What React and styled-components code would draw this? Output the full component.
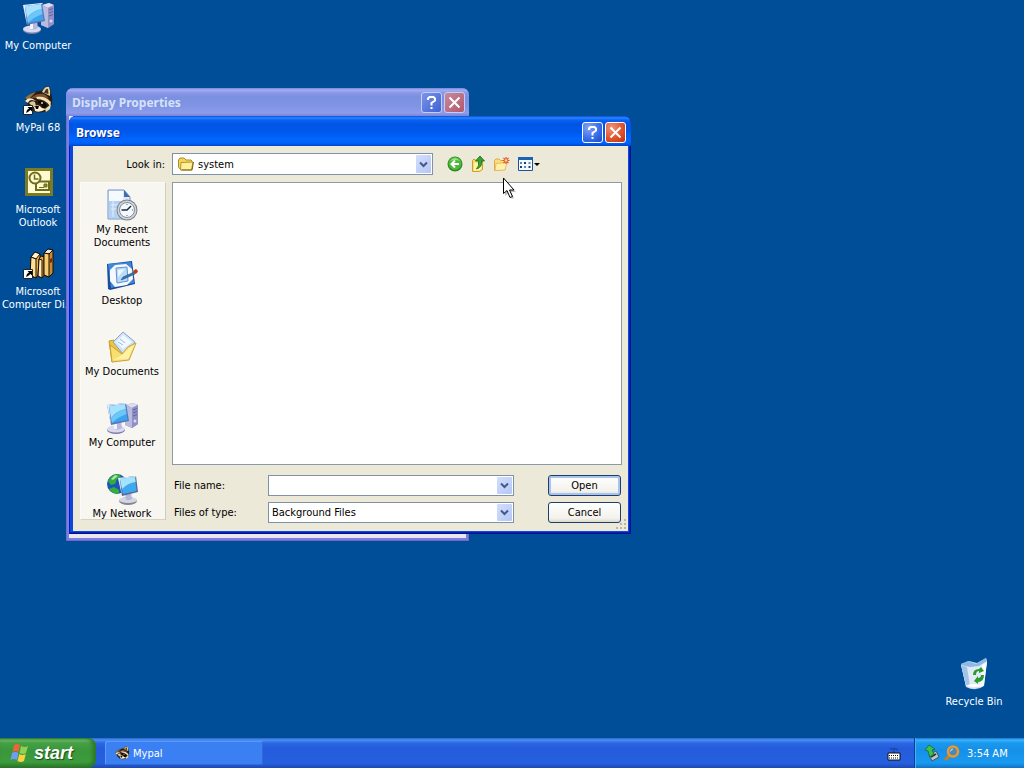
import styled, { createGlobalStyle, css } from "styled-components";

const GlobalStyle = createGlobalStyle`
  * {
    box-sizing: border-box;
  }
  body {
    margin: 0;
    font-family: "DejaVu Sans Condensed", "Noto Sans", sans-serif;
    font-size: 11px;
    line-height: 13px;
    color: #000;
  }
  button, input, select {
    font: inherit;
    color: inherit;
  }
  svg {
    display: block;
    flex: none;
  }
`;

/* desktop */

const Screen = styled.div`
  display: flex;
  flex-direction: column;
  height: 100vh;
  overflow: hidden;
  background: #004e98;
`;

const Desktop = styled.main`
  position: relative;
  flex: 1;
`;

const Shortcuts = styled.nav`
  display: flex;
  flex-direction: column;
  align-items: flex-start;
  padding-top: 2px;
`;

const Shortcut = styled.a`
  display: flex;
  flex-direction: column;
  align-items: center;
  gap: 5px;
  width: 76px;
  height: 82px;
  color: #fff;
  text-align: center;
  text-decoration: none;
  white-space: pre;
`;

const BinCorner = styled.div`
  position: absolute;
  right: 12px;
  bottom: 30px;
  a {
    height: auto;
  }
`;

/* windows */

const Window = styled.section`
  position: absolute;
  border-radius: 7px 7px 0 0;
  ${(props) =>
    props.$active
      ? css`
          left: 69px;
          top: 116px;
          width: 562px;
          background: #0a48e0;
          box-shadow: inset 1px 0 #0019cf, inset -1px -1px #00138c, inset -2px -2px #0522b8;
        `
      : css`
          left: 66px;
          top: 88px;
          width: 403px;
          background: #7b80de;
          box-shadow: inset 1px 0 #6d6fcb, inset -1px -1px #6f68c8;
        `}
`;

const TitleBar = styled.header`
  display: flex;
  align-items: center;
  gap: 2px;
  height: ${(props) => (props.$active ? 30 : 28)}px;
  padding: ${(props) => (props.$active ? "3px 5px 0 7px" : "1px 4px 0 6px")};
  border-radius: 7px 7px 0 0;
  background: ${(props) =>
    props.$active
      ? "linear-gradient(#0a4fd8 0, #2a86ff 2px, #0a62f4 4px, #0054e3 8px, #0058ec 16px, #0066ff 23px, #0062fa 27px, #0046cc 30px)"
      : "linear-gradient(#7486dc 0, #a3aef2 2px, #8797e6 5px, #7b90e0 9px, #8094e4 18px, #8d9cec 25px, #7c82d8 28px)"};
`;

const Title = styled.h1`
  flex: 1;
  margin: 0;
  padding-top: 1px;
  font: bold 12px/18px "Noto Sans", "Open Sans", sans-serif;
  color: ${(props) => (props.$active ? "#fff" : "#d5e1f8")};
  text-shadow: ${(props) => (props.$active ? "1px 1px #0a2f94" : "none")};
`;

const CaptionButton = styled.button`
  display: grid;
  place-items: center;
  width: 21px;
  height: 21px;
  padding: 0;
  border: 1px solid #fff;
  border-radius: 3px;
  background: ${(props) =>
    props.$close
      ? "radial-gradient(circle at 30% 25%, #f0937a, #e2522c 55%, #b8300f)"
      : "radial-gradient(circle at 30% 25%, #86a6f5, #3c6ee8 55%, #1c48c4)"};
  ${(props) =>
    props.$dim &&
    css`
      border-color: #c5cdf5;
      background: ${props.$close
        ? "linear-gradient(135deg, #c58a9e, #b3586c)"
        : "linear-gradient(135deg, #7a94ea, #3e62d2)"};
    `}
`;

const BackBody = styled.div`
  height: 422px;
  margin: 0 3px;
  background: #e9e7f4;
`;

const WindowEdge = styled.div`
  height: 3px;
`;

const DialogBody = styled.form`
  position: relative;
  margin: 0 3px 0 4px;
  padding: 7px 6px 8px 7px;
  background: #ece9d8;
`;

const LookRow = styled.div`
  display: grid;
  grid-template-columns: 85px 261px 1fr;
  align-items: center;
  column-gap: 7px;
  margin-bottom: 7px;
  > label {
    text-align: right;
  }
`;

const Toolbar = styled.div`
  display: flex;
  align-items: center;
  gap: 7px;
  padding-left: 7px;
`;

const ToolButton = styled.button`
  display: flex;
  padding: 0;
  border: 0;
  background: none;
`;

const Columns = styled.div`
  display: grid;
  grid-template-columns: 86px 1fr;
  column-gap: 6px;
  align-items: start;
`;

const Places = styled.nav`
  height: 338px;
  overflow: hidden;
  background: #f8f6f1;
  border: 1px solid #fbfaf6;
  border-right-color: #cfccba;
  border-bottom-color: #d5d2c2;
`;

const Place = styled.button`
  display: flex;
  flex-direction: column;
  align-items: center;
  gap: 2px;
  width: 100%;
  height: 71px;
  padding: 6px 2px 0 0;
  border: 0;
  background: none;
  text-align: center;
  white-space: pre;
`;

const FileList = styled.div`
  height: 283px;
  margin-bottom: 10px;
  background: #fff;
  border: 1px solid #8a9aa8;
`;

const Fields = styled.div`
  display: grid;
  grid-template-columns: 94px 246px 1fr;
  row-gap: 6px;
  align-items: center;
  padding-left: 2px;
  padding-right: 1px;
  > button {
    justify-self: end;
  }
`;

const Combo = styled.div`
  position: relative;
  display: flex;
  height: ${(props) => (props.$tall ? 22 : 21)}px;
  border: 1px solid #7f93a8;
  background: #fff;
  select,
  input {
    flex: 1;
    min-width: 0;
    padding: 0 20px 0 ${(props) => (props.$icon ? 25 : 3)}px;
    border: 0;
    outline: 0;
    background: none;
    appearance: none;
  }
  > svg {
    position: absolute;
    left: 4px;
    top: 2px;
    pointer-events: none;
  }
`;

const Arrow = styled.span`
  position: absolute;
  top: 1px;
  right: 1px;
  bottom: 1px;
  display: grid;
  place-items: center;
  width: 15px;
  border-radius: 1px;
  background: linear-gradient(135deg, #d3defc, #b4c7f6);
  pointer-events: none;
`;

const PushButton = styled.button`
  width: 73px;
  height: 21px;
  padding: 0;
  border: 1px solid #1d3f6e;
  border-radius: 3px;
  background: linear-gradient(#fff, #f3f2ec 80%, #dcd8cc);
  box-shadow: ${(props) => (props.$default ? "inset 0 0 0 2px #a9c3ef" : "none")};
`;

const Grip = styled.svg`
  position: absolute;
  right: 1px;
  bottom: 1px;
`;

const Cursor = styled.svg`
  position: absolute;
  left: 502px;
  top: 177px;
  pointer-events: none;
`;

/* taskbar */

const Taskbar = styled.footer`
  display: flex;
  align-items: stretch;
  height: 30px;
  color: #fff;
  background: linear-gradient(#2a62cc 0, #4a90f5 2px, #2c68e2 5px, #245bdb 10px, #2660de 25px, #1c48b4 30px);
`;

const StartButton = styled.button`
  display: flex;
  align-items: center;
  gap: 4px;
  width: 96px;
  padding: 0 0 0 10px;
  border: 0;
  border-radius: 0 8px 8px 0;
  color: #fff;
  font: italic bold 18px/20px "Liberation Sans", sans-serif;
  text-shadow: 1px 1px 1px #1d4a1c;
  background: linear-gradient(#2f7d30 0, #6cbb6a 2px, #46a046 5px, #3a973b 12px, #3c9c3d 24px, #2b7329 30px);
  box-shadow: inset -3px 0 4px #2a7429;
`;

const Tasks = styled.div`
  flex: 1;
  padding: 3px 0 3px 9px;
`;

const TaskButton = styled.button`
  display: flex;
  align-items: center;
  gap: 3px;
  width: 158px;
  height: 24px;
  padding: 0 9px;
  border: 0;
  border-radius: 2px;
  color: #fff;
  background: #3b80f2;
  box-shadow: inset 1px 1px #5a9af8, inset -1px -1px #2f6ad8;
`;

const Keyboard = styled.button`
  display: flex;
  align-items: center;
  padding: 2px 13px 0 0;
  border: 0;
  background: none;
`;

const Tray = styled.div`
  display: flex;
  align-items: center;
  gap: 3px;
  width: 110px;
  padding: 0 0 0 9px;
  border-left: 1px solid #0c3a9c;
  background: linear-gradient(#1274d0 0, #3cb4fa 2px, #1a98ee 5px, #1590e8 12px, #189aef 25px, #1070c4 30px);
  box-shadow: inset 1px 0 #3fb6f8;
  time {
    margin-left: 3px;
  }
`;

/* icons */

const Computer = () => (
  <svg width="32" height="32" viewBox="0 0 32 32">
    <path d="M20 3 27 1l5 2v19l-6 4-7-3z" fill="#8586bd" />
    <path d="m20 3 7-2 5 2-6 3z" fill="#dcdcf2" />
    <path d="m19 3 7 3v20l-7-3z" fill="#b9bae0" />
    <path d="m26 6 6-3v19l-6 4z" fill="#8f90c4" />
    <path d="m27 8 4-1.500M27 11l4-1.500M27 14l4-1.500" stroke="#61639e" />
    <circle cx="29" cy="19" r="1.500" fill="#d8daf4" />
    <ellipse cx="10" cy="28" rx="9" ry="4" fill="#7d7fb0" />
    <ellipse cx="10" cy="27" rx="9" ry="3.500" fill="#d9daf0" />
    <path d="m8 20 7-1 1 7q-4 3-8 1z" fill="#b7b8de" />
    <path d="M8 21h3v6H8z" fill="#f4f4ff" />
    <path d="M1 3 20 1l3 18-18 4z" fill="#5d75b8" />
    <path d="M1 3 20 1l1 1-18 2 2 19z" fill="#e6eafc" />
    <path d="m3 4 16-2 2.500 16L6 21z" fill="#3ba5ec" />
    <path d="m3 4 16-2 .7 5Q10 9 5 16z" fill="#a6e2fd" />
    <path d="m5 16q6-7 14.700-9l.8 5Q12 15 6 21z" fill="#6cc6f8" />
  </svg>
);

const ShortcutArrow = () => (
  <g>
    <path d="M1.500 21.500h9v9h-9z" fill="#fff" stroke="#222" />
    <path d="m4 29 1-3 2-1.500L5.500 23H10v4.500L8.500 26 6 28z" fill="#000" />
  </g>
);

const RaccoonArt = () => (
  <>
    <path d="M3 15q6-8 16-8l6-5q4 1 4 7 2 5 1 11l-5 7q-8 3-14 0L7 23z" fill="#2a1b12" />
    <path d="M20 8q3-6 7-5 2 4 1 9z" fill="#e7d3a4" />
    <path d="M22 9q2-5 4-4l.5 5z" fill="#4a3524" />
    <path d="M3 14q5-5 11-6l-4 4-4 4z" fill="#8c7048" />
    <path d="M8 15q5-5 9-5 7-1 10 5l-5-2q-5-2-8 1-3 0-6 1z" fill="#7c5029" />
    <path d="M3 17q3-4 8-2l3 2-4-1q-3 0-4 3z" fill="#f7e9c0" />
    <path d="M14 13q8-2 15 5l-1 4q-5-7-13-7z" fill="#f4dfaf" />
    <path d="M7 19q3-3 6-1l1 4-3 1z" fill="#d8c69c" />
    <path d="M16 17q7 0 9 5l-4 3q0-5-5-6z" fill="#0c0805" />
    <path d="M12 23q4-4 8 1l4 1q-6 4-11 2z" fill="#fff1cf" />
    <path d="M13 22h4l-1 3h-2z" fill="#000" />
    <path d="m23 25 6-5-1 5-4 3z" fill="#f0d9a4" />
    <circle cx="20" cy="19" r="1" fill="#e9d9a8" />
  </>
);

const Raccoon = () => (
  <svg width="32" height="32" viewBox="0 0 32 32">
    <RaccoonArt />
    <ShortcutArrow />
  </svg>
);

const Outlook = () => (
  <svg width="32" height="32" viewBox="0 0 32 32">
    <path d="M3 2h28v28H3z" fill="#7c7a22" />
    <path d="M6 5h22v22H6z" fill="#fffbd0" />
    <path d="M14 15.500h13v8.500H14z" fill="#fffbd0" stroke="#6f6d1c" strokeWidth="2" />
    <circle cx="13" cy="12" r="5.500" fill="#fffbd0" stroke="#6f6d1c" strokeWidth="2" />
    <path d="M12.500 8.500v4.500h4" fill="none" stroke="#6f6d1c" strokeWidth="1.500" />
    <path d="M22 18h3v3h-3zM17 21.500h5" fill="#8a881f" stroke="#6f6d1c" />
  </svg>
);

const Books = () => (
  <svg width="32" height="32" viewBox="0 0 32 32">
    <g stroke="#160c00" strokeWidth="1" strokeLinejoin="round">
      <path d="m9 9 4-5 5 2v19l-4 5-6-3z" fill="#f2b03c" />
      <path d="m9 9 4-5 5 2-4 5z" fill="#fff6d8" />
      <path d="m9 9 5 2v19l-6-3z" fill="#ffe09a" />
      <path d="m17 11 2-3 4 1v17l-3 4-4-2z" fill="#eda63a" />
      <path d="m17 11 3 1v18l-4-2z" fill="#ffe9b8" />
      <path d="m22 5 4-4 5 1v23l-4 4-5-2z" fill="#c98a2c" />
      <path d="m22 5 4-4 5 1-4 4z" fill="#e8e4d8" />
      <path d="m22 5 5 1v23l-5-2z" fill="#f8cd72" />
    </g>
    <path d="m28 11 2-1v4l-2 1z" fill="#8b1e10" />
    <ShortcutArrow />
  </svg>
);

const RecycleBin = () => (
  <svg width="32" height="32" viewBox="0 0 32 32">
    <path d="m3 6 8-3 8 2 9-5 1 3-3 25q-8 6-18 1z" fill="#c9dcf1" />
    <path d="m3 6 7-3 8 3 10-6 1 4-5 4q-10 3-21 1z" fill="#8db9e4" />
    <path d="m3 7 9 2 9-1 8-5-1 5-3 19q-8 6-17 1z" fill="#dfeaf8" />
    <path d="m3 7 6 2 3 19q-2 0-4-1z" fill="#a3c4ea" />
    <path d="m24 7 5-3-3 23q-2 2-4 2z" fill="#f8fbff" />
    <ellipse cx="16" cy="27.500" rx="7" ry="1.500" fill="#fff" />
    <path
      d="M15 17q0-6 6-6l2-2 3 4-5 2v-2q-3 0-3 4zM26 17q0 7-6 7v2l-4-3 4-5v2q3 0 3-3z"
      fill="#2d9b2c"
    />
  </svg>
);

const RecentDocs = () => (
  <svg width="32" height="32" viewBox="0 0 32 32">
    <path d="M2 1h16l6 7v22H2z" fill="#dce9fa" stroke="#7597c6" />
    <path d="M3 2h14v9l7 3H3z" fill="#f5faff" />
    <path d="M18 1v7h6z" fill="#3f6fac" />
    <path d="M3 12h17v17H3z" fill="#b4d1f3" />
    <path d="M5 16h9M5 20h7M7 10v18" stroke="#e4f0ff" />
    <circle cx="21" cy="21" r="10.500" fill="#7a8189" />
    <circle cx="21" cy="21" r="9.500" fill="#cfd5da" />
    <circle cx="21" cy="21" r="7.500" fill="#f3f9ff" stroke="#848c96" />
    <path d="M21 15v1M21 26v1M15 21h1M26 21h1" stroke="#566" />
    <path d="m25 17-4 4h-5" fill="none" stroke="#1e2c40" strokeWidth="1.500" />
  </svg>
);

const DesktopPad = () => (
  <svg width="32" height="32" viewBox="0 0 32 32">
    <path d="m1 4 25-3 3 23-25 6-2-1z" fill="#1c4c9a" />
    <path d="m2 4 23-2 3 21-23 5z" fill="#3f86dc" />
    <path d="m9 5 11-1 6 5 1 10-6 6-12 2-5-6V10z" fill="#f4faff" />
    <path d="m10 8 11-1 1 14-11 2z" fill="#b9dcf8" stroke="#5f93cc" />
    <path d="m12 10 7-1-7 8z" fill="#ecf7ff" />
    <path d="m17 17 11-5 1 2-11 5-3 1z" fill="#3972ae" stroke="#244a7c" strokeWidth=".5" />
    <path d="m27 11 3-2 2 2-1 2-2 1z" fill="#b83c22" />
  </svg>
);

const Documents = () => (
  <svg width="32" height="32" viewBox="0 0 32 32">
    <path d="m3 10 5-1 3 3 5-2v17L6 31z" fill="#efc43d" stroke="#c39c2c" />
    <path d="m7 11 10-10 12 10-11 13z" fill="#cfe4fa" stroke="#8aa5c8" />
    <path d="m10 11 7-7 9 7-9 7z" fill="#f1f8ff" />
    <path d="m14 8 5 4M12 11l5 3" stroke="#9bbce2" />
    <path d="m4 14 2 17 17-2 7-17-8 4-6 7z" fill="#f9df72" stroke="#c8a234" />
    <path d="m7 29 9-5 7-7 6-4-7 15z" fill="#fff2a4" />
  </svg>
);

const Network = () => (
  <svg width="32" height="32" viewBox="0 0 32 32">
    <circle cx="11" cy="11" r="10" fill="#1c55b8" />
    <path d="M2 8q4-8 11-7l2 3-4 2-2 5-4 1zM3 16l5-2 5 3v4q-7 0-10-5z" fill="#35ad3c" />
    <path d="m5 6 4-4 3 1-5 4z" fill="#a5e6a0" />
    <ellipse cx="22" cy="28" rx="9" ry="4" fill="#85878f" />
    <ellipse cx="22" cy="27" rx="9" ry="3" fill="#d4d6e4" />
    <path d="m19 20 6-1 1 7q-3 2-6 1z" fill="#b4b9d6" />
    <path d="m12 5 18-2 2 16-16 4z" fill="#546a9c" />
    <path d="m12 5 18-2-1 2-15 2 2 16z" fill="#e5e9f4" />
    <path d="m14 6 15-2 1.500 14L17 21z" fill="#3fa9ed" />
    <path d="m14 6 15-2 .6 5q-8 1-13.600 7z" fill="#a5e3fc" />
  </svg>
);

const Folder = () => (
  <svg width="18" height="17" viewBox="0 0 18 17">
    <path d="M1.500 4 3 2h4l2 2h5l1 1v8H3l-1.500-2z" fill="#f4d35c" stroke="#b08c28" />
    <path d="m4 6.500 12-.5-1.500 8H3.500z" fill="#fff09a" stroke="#b8962c" />
    <path d="M4.500 14h10.500L16.500 6" fill="none" stroke="#7d6418" />
  </svg>
);

const BackIcon = () => (
  <svg width="16" height="16" viewBox="0 0 16 16">
    <circle cx="8" cy="8" r="7.500" fill="#2b8a20" />
    <circle cx="8" cy="7.500" r="6.500" fill="#4fb83c" />
    <path d="M3 5q5-6 10 0-5-2-10 0" fill="#9adf86" />
    <path d="M12 8H5M8 4.500 4.500 8 8 11.500" fill="none" stroke="#fff" strokeWidth="2" />
  </svg>
);

const UpIcon = () => (
  <svg width="16" height="16" viewBox="0 0 16 16">
    <path d="M2.500 4.500 4 3l2 1.500h6.500v9l-3 2h-7z" fill="#f7dc69" stroke="#cb9f2c" />
    <path d="m4 7 8-1-1 8-7 1z" fill="#fff3a9" />
    <path d="m10 0 4.500 5h-3q1 6-5 8 3-3 2-8H5.500z" fill="#36a52b" stroke="#14661a" strokeWidth=".8" />
  </svg>
);

const NewFolderIcon = () => (
  <svg width="17" height="16" viewBox="0 0 17 16">
    <path d="M1.500 4.500 3 3h3l1.500 1.500H12v9l-10.500 1z" fill="#fbdc7e" stroke="#dfa84a" />
    <path d="m3 7.500 11-1-2 7.500-10 .5z" fill="#fff0ac" stroke="#e4b351" strokeWidth=".8" />
    <path d="M13 1v7M9.500 4.500h7M10.500 2l5 5M15.500 2l-5 5" stroke="#dd5a24" strokeWidth="1.200" />
    <circle cx="13" cy="4.500" r="1.300" fill="#ffd6a0" />
  </svg>
);

const ViewsIcon = () => (
  <svg width="24" height="16" viewBox="0 0 24 16">
    <path d="M1.500 1.500h14v13h-14z" fill="#f4faff" stroke="#17569e" />
    <path d="M1 1h15v3H1z" fill="#1d63b4" />
    <path d="M3 6h2v2H3zM11.500 6h2v2h-2zM7 10h2v2H7z" fill="#5d86b4" />
    <path d="M7 6h2v2H7zM3 10h2v2H3zM11.500 10h2v2h-2z" fill="#20405f" />
    <path d="M17 7h6l-3 3z" fill="#000" />
  </svg>
);

const Chevron = () => (
  <svg width="9" height="7" viewBox="0 0 9 7">
    <path d="m1 1.500 3.500 3.500L8 1.500" fill="none" stroke="#45588c" strokeWidth="2" />
  </svg>
);

const Cross = () => (
  <svg width="13" height="13" viewBox="0 0 13 13">
    <path d="m1.500 1.500 10 10M11.500 1.500l-10 10" stroke="#fff" strokeWidth="2" />
  </svg>
);

const Question = () => (
  <svg width="13" height="15" viewBox="0 0 13 15">
    <path d="M3 5V3.500L4.500 2h4L10 3.500v2L6.500 8v2.500" fill="none" stroke="#fff" strokeWidth="2" />
    <path d="M5.500 12h2v2h-2z" fill="#fff" />
  </svg>
);

const Flag = () => (
  <svg width="20" height="20" viewBox="0 0 20 20">
    <path d="M4 2q3-2 6 0L8.500 9q-3-2-6 0z" fill="#ee6434" />
    <path d="M11 3q4 2 7 0l-2 7q-3 2-6.500 0z" fill="#8fd150" />
    <path d="M2 10q3-2 6.500 0L7 17q-3-2-6.500 0z" fill="#6f9cf4" />
    <path d="M9.300 11q3 2 6.500 0L14 18q-3 2-6.500 0z" fill="#fbd13c" />
  </svg>
);

const KeyboardIcon = () => (
  <svg width="14" height="14" viewBox="0 0 14 14">
    <path d="M3 1q1 2 3 1t5 1M7 3v3" fill="none" stroke="#173880" />
    <path d="M1 6h12v7H1z" fill="#fff" stroke="#111" />
    <path d="M2 8.500h10M2 11h10" stroke="#111" strokeDasharray="1 1" />
  </svg>
);

const TrayDevice = () => (
  <svg width="16" height="18" viewBox="0 0 16 18">
    <path d="m5 11 7-4 3 6-7 4z" fill="#bcc7cc" stroke="#435660" />
    <path d="m7 13 5-3" stroke="#22333c" strokeWidth="1.500" />
    <path d="M1 6 5 1l6 4-3 1 2 4-4 3-2-6z" fill="#3fc04a" stroke="#176a35" strokeWidth=".8" />
  </svg>
);

const Magnifier = () => (
  <svg width="18" height="18" viewBox="0 0 18 18">
    <path d="m3 15 4-4" stroke="#d47a1c" strokeWidth="3" strokeLinecap="round" />
    <circle cx="10" cy="7.500" r="5" fill="#4a8bb4" stroke="#f0962c" strokeWidth="2.500" />
    <path d="M7.500 7.500q0-2.500 2.500-2.500" fill="none" stroke="#cde6f4" />
  </svg>
);

const shortcuts = [
  { label: "My Computer", Icon: Computer },
  { label: "MyPal 68", Icon: Raccoon },
  { label: "Microsoft\nOutlook", Icon: Outlook },
  { label: "Microsoft\nComputer Di...", Icon: Books },
];

const places = [
  { label: "My Recent\nDocuments", Icon: RecentDocs },
  { label: "Desktop", Icon: DesktopPad },
  { label: "My Documents", Icon: Documents },
  { label: "My Computer", Icon: Computer },
  { label: "My Network", Icon: Network },
];

const tools = [
  { label: "Back", Icon: BackIcon },
  { label: "Up one level", Icon: UpIcon },
  { label: "Create new folder", Icon: NewFolderIcon },
  { label: "View menu", Icon: ViewsIcon },
];

function Caption({ title, active }) {
  return (
    <TitleBar $active={active}>
      <Title $active={active}>{title}</Title>
      <CaptionButton type="button" aria-label="Help" $dim={!active}>
        <Question />
      </CaptionButton>
      <CaptionButton type="button" aria-label="Close" $close $dim={!active}>
        <Cross />
      </CaptionButton>
    </TitleBar>
  );
}

function BrowseDialog() {
  return (
    <Window $active>
      <Caption title="Browse" active />
      <DialogBody onSubmit={(e) => e.preventDefault()}>
        <LookRow>
          <label htmlFor="look">Look in:</label>
          <Combo $tall $icon>
            <Folder />
            <select id="look">
              <option>system</option>
            </select>
            <Arrow><Chevron /></Arrow>
          </Combo>
          <Toolbar>
            {tools.map(({ label, Icon }) => (
              <ToolButton key={label} type="button" aria-label={label}>
                <Icon />
              </ToolButton>
            ))}
          </Toolbar>
        </LookRow>
        <Columns>
          <Places>
            {places.map(({ label, Icon }) => (
              <Place key={label} type="button">
                <Icon />
                {label}
              </Place>
            ))}
          </Places>
          <div>
            <FileList />
            <Fields>
              <label htmlFor="name">File name:</label>
              <Combo>
                <input id="name" type="text" />
                <Arrow><Chevron /></Arrow>
              </Combo>
              <PushButton $default>Open</PushButton>
              <label htmlFor="type">Files of type:</label>
              <Combo>
                <select id="type">
                  <option>Background Files</option>
                </select>
                <Arrow><Chevron /></Arrow>
              </Combo>
              <PushButton type="button">Cancel</PushButton>
            </Fields>
          </div>
        </Columns>
        <Grip width="12" height="12" viewBox="0 0 12 12">
          <path d="M9 1h2v2H9zM5 5h2v2H5zM9 5h2v2H9zM1 9h2v2H1zM5 9h2v2H5zM9 9h2v2H9z" fill="#bbb7a2" />
        </Grip>
      </DialogBody>
      <WindowEdge />
    </Window>
  );
}

export default function App() {
  return (
    <Screen>
      <GlobalStyle />
      <Desktop>
        <Shortcuts>
          {shortcuts.map(({ label, Icon }) => (
            <Shortcut key={label} href="#">
              <Icon />
              {label}
            </Shortcut>
          ))}
        </Shortcuts>
        <BinCorner>
          <Shortcut href="#">
            <RecycleBin />
            Recycle Bin
          </Shortcut>
        </BinCorner>
        <Window>
          <Caption title="Display Properties" />
          <BackBody />
          <WindowEdge />
        </Window>
        <BrowseDialog />
        <Cursor width="16" height="24" viewBox="0 0 16 24">
          <path d="m3 3 11 12h-5l3 6-2 1-3-6-4 3z" fill="#000" opacity=".25" />
          <path d="M1.500 1v15.500l3.500-3 3 7 2.500-1-3-6.500H12z" fill="#fff" stroke="#000" />
        </Cursor>
      </Desktop>
      <Taskbar>
        <StartButton>
          <Flag />
          start
        </StartButton>
        <Tasks>
          <TaskButton>
            <svg width="16" height="16" viewBox="0 0 32 32">
              <RaccoonArt />
            </svg>
            Mypal
          </TaskButton>
        </Tasks>
        <Keyboard aria-label="Keyboard">
          <KeyboardIcon />
        </Keyboard>
        <Tray>
          <TrayDevice />
          <Magnifier />
          <time>3:54 AM</time>
        </Tray>
      </Taskbar>
    </Screen>
  );
}
